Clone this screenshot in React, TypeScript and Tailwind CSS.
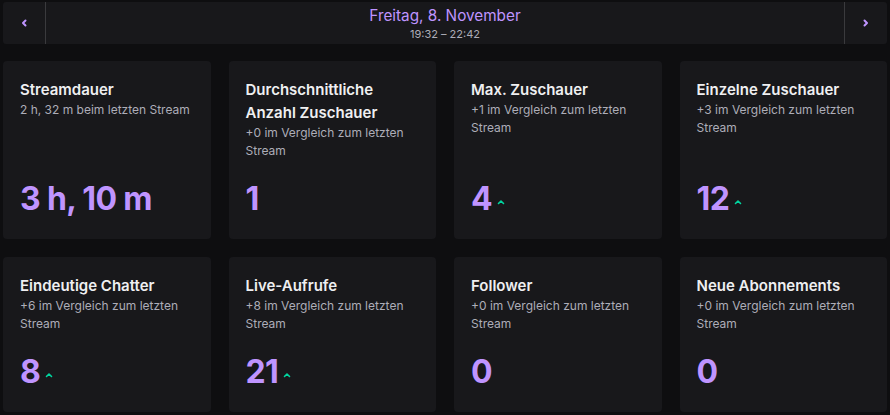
const stats = [
  { title: "Streamdauer", sub: "2 h, 32 m beim letzten Stream", value: "3 h, 10 m", up: false },
  { title: "Durchschnittliche Anzahl Zuschauer", sub: "+0 im Vergleich zum letzten Stream", value: "1", up: false },
  { title: "Max. Zuschauer", sub: "+1 im Vergleich zum letzten Stream", value: "4", up: true },
  { title: "Einzelne Zuschauer", sub: "+3 im Vergleich zum letzten Stream", value: "12", up: true },
  { title: "Eindeutige Chatter", sub: "+6 im Vergleich zum letzten Stream", value: "8", up: true },
  { title: "Live-Aufrufe", sub: "+8 im Vergleich zum letzten Stream", value: "21", up: true },
  { title: "Follower", sub: "+0 im Vergleich zum letzten Stream", value: "0", up: false },
  { title: "Neue Abonnements", sub: "+0 im Vergleich zum letzten Stream", value: "0", up: false },
];

function Chevron({ dir }: { dir: "left" | "right" }) {
  return (
    <svg width="8" height="8" viewBox="0 0 8 8" fill="none">
      <path
        d={dir === "left" ? "M5.5 1.5 3 4l2.5 2.5" : "M2.5 1.5 5 4 2.5 6.5"}
        stroke="#bf94ff"
        strokeWidth="2"
        strokeLinecap="round"
        strokeLinejoin="round"
      />
    </svg>
  );
}

function Caret() {
  return (
    <svg width="8" height="6" viewBox="0 0 8 6" fill="none" className="ml-[5px] mt-[6px]">
      <path d="M1.5 4.5 4 2l2.5 2.5" stroke="#00d6a0" strokeWidth="1.6" strokeLinecap="round" strokeLinejoin="round" />
    </svg>
  );
}

export default function App() {
  return (
    <div
      className="min-h-screen bg-[#0e0e10] px-[3px] pt-[2px] pb-4"
      style={{ fontFamily: "Inter, 'Noto Sans', sans-serif" }}
    >
      {/* Date switcher */}
      <div className="flex h-[42px] items-stretch rounded-[3px] bg-[#18181b]">
        <button className="flex w-[43px] items-center justify-center border-r border-[#3a3a3d]">
          <Chevron dir="left" />
        </button>
        <div className="flex flex-1 flex-col items-center pt-[4px]">
          <div className="text-[15.3px] leading-[19px] text-[#bf94ff]">Freitag, 8. November</div>
          <div className="mt-[2px] text-[11px] leading-[14px] text-[#adadb8]">19:32 – 22:42</div>
        </div>
        <button className="flex w-[43px] items-center justify-center border-l border-[#3a3a3d]">
          <Chevron dir="right" />
        </button>
      </div>

      {/* Stat cards */}
      <div className="mt-[17px] grid grid-cols-4 gap-[18px]">
        {stats.map((s) => (
          <div
            key={s.title}
            className="flex flex-col rounded-[4px] bg-[#18181b] px-[17px] pt-[17px] pb-[20px]"
          >
            <div className="text-[15px] font-semibold leading-[23px] text-[#efeff1]">{s.title}</div>
            <div className="pb-[19px] text-[12px] leading-[18px] text-[#adadb8]">{s.sub}</div>
            <div className="mt-auto flex items-center">
              <span className="text-[32px] font-bold leading-[40px] tracking-[-0.02em] text-[#bf94ff]">
                {s.value}
              </span>
              {s.up && <Caret />}
            </div>
          </div>
        ))}
      </div>
    </div>
  );
}
